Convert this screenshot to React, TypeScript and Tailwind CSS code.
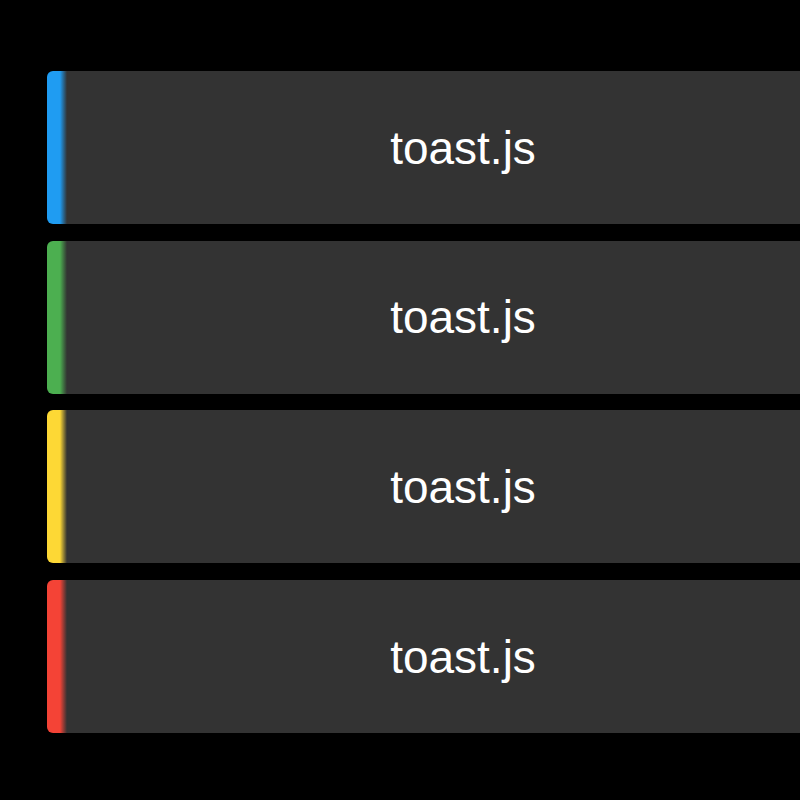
import React from "react";

const toasts = [
  { color: "#1e9bf0", cls: "bg-[linear-gradient(to_right,#1f9cf2_0px,#1f9cf2_13px,#333333_20px)]" },
  { color: "#4caf50", cls: "bg-[linear-gradient(to_right,#4caf50_0px,#4caf50_13px,#333333_20px)]" },
  { color: "#fdd835", cls: "bg-[linear-gradient(to_right,#fdd835_0px,#fdd835_13px,#333333_20px)]" },
  { color: "#f44336", cls: "bg-[linear-gradient(to_right,#f44336_0px,#f44336_13px,#333333_20px)]" },
];

export default function App() {
  return (
    <div className="w-[800px] h-[800px] bg-black overflow-hidden pt-[71px] pl-[47px]">
      <div className="flex flex-col gap-[16.7px] w-[832px]">
        {toasts.map((t, i) => (
          <div
            key={i}
            className={`h-[153px] w-[832px] rounded-[6px] flex items-center justify-center ${t.cls}`}
          >
            <span
              className="text-white text-[46px] leading-none"
              style={{ fontFamily: '"Liberation Sans", Arial, sans-serif' }}
            >
              toast.js
            </span>
          </div>
        ))}
      </div>
    </div>
  );
}
